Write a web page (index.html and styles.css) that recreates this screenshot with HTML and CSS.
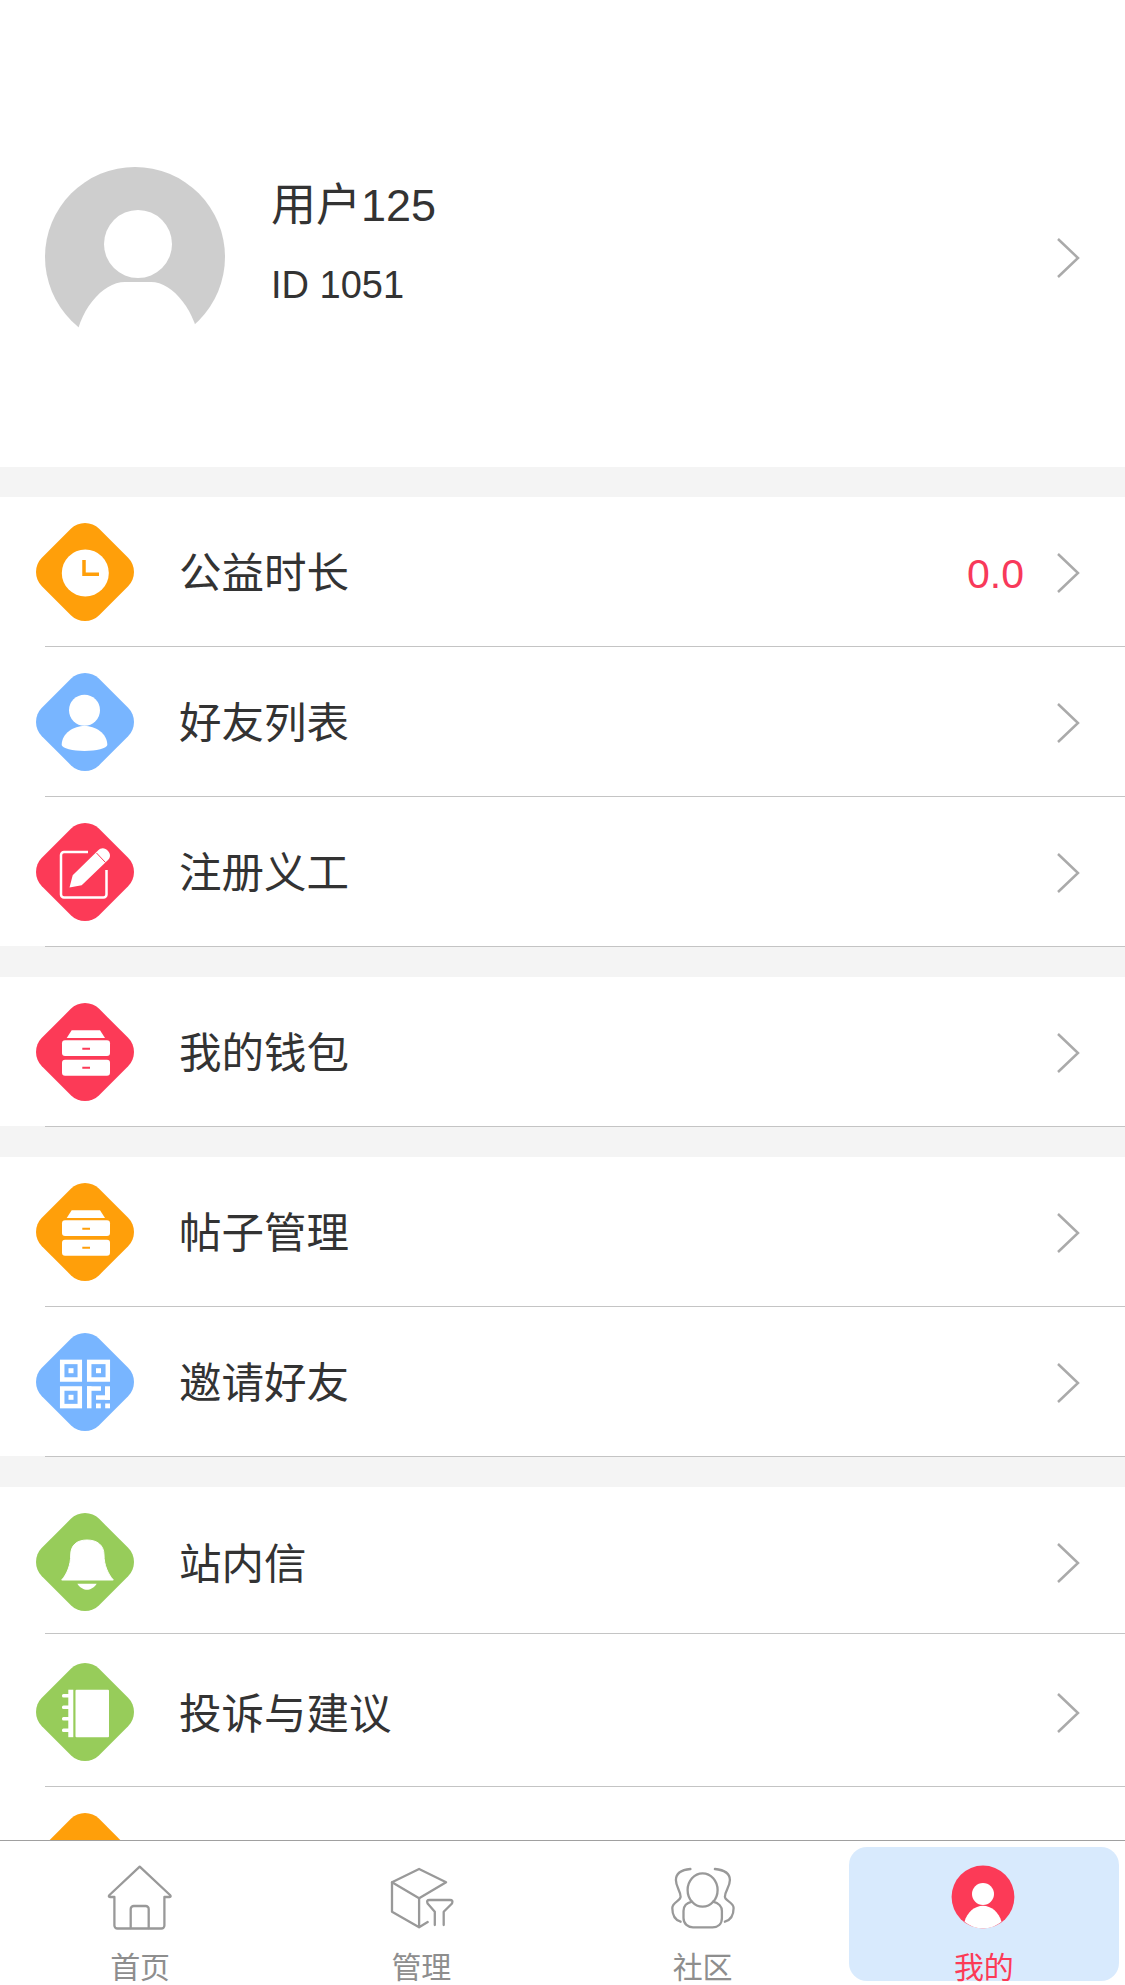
FILE: index.html
```html
<!DOCTYPE html>
<html lang="zh-CN">

<head>
  <meta charset="UTF-8" />
  <meta name="viewport" content="width=device-width, initial-scale=1.0" />
  <title>我的</title>
  <link rel="stylesheet" href="styles.css">
</head>

<body>
  <main class="content">
    <section class="profile">
      <svg class="avatar" width="190" height="180" viewBox="0 0 190 180">
        <circle cx="90" cy="90" r="90" fill="#cecece" />
        <circle cx="93" cy="77" r="34" fill="#fff" />
        <path d="M30 180 C32 145 57 115 80 115 H106 C128 115 152 145 155 180Z" fill="#fff" />
      </svg>
      <div class="profile-text">
        <div class="profile-name">用户125</div>
        <div class="profile-id">ID 1051</div>
      </div>
      <svg class="chevron" width="24" height="42" viewBox="0 0 24 42"><path d="M2 2 L22 21 L2 40" /></svg>
    </section>

    <section class="group">
      <div class="row">
        <svg class="icon orange" width="98" height="98" viewBox="0 0 98 98">
          <rect x="8.5" y="8.5" width="81" height="81" rx="20" transform="rotate(45 49 49)" fill="currentColor" />
          <circle cx="49.3" cy="50" r="23.5" fill="#fff" />
          <path d="M48 37 V51.3 H63" fill="none" stroke="currentColor" stroke-width="3.5" />
        </svg>
        <span class="label">公益时长</span>
        <span class="value">0.0</span>
        <svg class="chevron" width="24" height="42" viewBox="0 0 24 42"><path d="M2 2 L22 21 L2 40" /></svg>
      </div>
      <div class="sep"></div>
      <div class="row">
        <svg class="icon blue" width="98" height="98" viewBox="0 0 98 98">
          <rect x="8.5" y="8.5" width="81" height="81" rx="20" transform="rotate(45 49 49)" fill="currentColor" />
          <circle cx="48.5" cy="37.3" r="15.5" fill="#fff" />
          <path d="M25.7 72 C25.7 60 38 53 48.5 53 C59 53 71.3 60 71.3 72 C71.3 75 60 78 48.5 78 C37 78 25.7 75 25.7 72Z" fill="#fff" />
        </svg>
        <span class="label">好友列表</span>
        <svg class="chevron" width="24" height="42" viewBox="0 0 24 42"><path d="M2 2 L22 21 L2 40" /></svg>
      </div>
      <div class="sep"></div>
      <div class="row">
        <svg class="icon red" width="98" height="98" viewBox="0 0 98 98">
          <rect x="8.5" y="8.5" width="81" height="81" rx="20" transform="rotate(45 49 49)" fill="currentColor" />
          <path d="M52 29 H28 a3 3 0 0 0 -3 3 V71.5 a3 3 0 0 0 3 3 H67.5 a3 3 0 0 0 3 -3 V47" fill="none" stroke="#fff" stroke-width="2.5" />
          <path d="M33.5 64.5 L36.7 52.3 L62 27.5 C65 24.5 69 24.5 72 28 C75 31 74.5 35 71.5 37.5 L45.7 62.3Z" fill="#fff" />
          <path d="M60.5 30 L69.5 39.5" stroke="currentColor" stroke-width="1" />
        </svg>
        <span class="label">注册义工</span>
        <svg class="chevron" width="24" height="42" viewBox="0 0 24 42"><path d="M2 2 L22 21 L2 40" /></svg>
      </div>
      <div class="sep"></div>
    </section>

    <section class="group">
      <div class="row">
        <svg class="icon red" width="98" height="98" viewBox="0 0 98 98">
          <rect x="8.5" y="8.5" width="81" height="81" rx="20" transform="rotate(45 49 49)" fill="currentColor" />
          <path d="M35.7 27.3 H64 L69 35 H30.7Z" fill="#fff" />
          <rect x="26" y="37.3" width="48" height="15.7" rx="3" fill="#fff" />
          <rect x="26" y="56.7" width="48" height="16" rx="3" fill="#fff" />
          <path d="M46.3 45.7 H54 M46.3 64.7 H54" stroke="currentColor" stroke-width="2" />
        </svg>
        <span class="label">我的钱包</span>
        <svg class="chevron" width="24" height="42" viewBox="0 0 24 42"><path d="M2 2 L22 21 L2 40" /></svg>
      </div>
      <div class="sep"></div>
    </section>

    <section class="group">
      <div class="row">
        <svg class="icon orange" width="98" height="98" viewBox="0 0 98 98">
          <rect x="8.5" y="8.5" width="81" height="81" rx="20" transform="rotate(45 49 49)" fill="currentColor" />
          <path d="M35.7 27.3 H64 L69 35 H30.7Z" fill="#fff" />
          <rect x="26" y="37.3" width="48" height="15.7" rx="3" fill="#fff" />
          <rect x="26" y="56.7" width="48" height="16" rx="3" fill="#fff" />
          <path d="M46.3 45.7 H54 M46.3 64.7 H54" stroke="currentColor" stroke-width="2" />
        </svg>
        <span class="label">帖子管理</span>
        <svg class="chevron" width="24" height="42" viewBox="0 0 24 42"><path d="M2 2 L22 21 L2 40" /></svg>
      </div>
      <div class="sep"></div>
      <div class="row">
        <svg class="icon blue" width="98" height="98" viewBox="0 0 98 98">
          <rect x="8.5" y="8.5" width="81" height="81" rx="20" transform="rotate(45 49 49)" fill="currentColor" />
          <g fill="none" stroke="#fff" stroke-width="4.5">
            <rect x="26.2" y="28.9" width="17.6" height="17.6" />
            <rect x="53.2" y="28.9" width="18.6" height="17.6" />
            <rect x="26.2" y="55.5" width="17.6" height="17.6" />
          </g>
          <g fill="#fff">
            <rect x="32.5" y="35.2" width="5" height="5" />
            <rect x="60" y="35.2" width="5" height="5" />
            <rect x="32.5" y="61.8" width="5" height="5" />
            <rect x="51" y="53.3" width="4.5" height="22" />
            <rect x="51" y="53.3" width="14" height="4.5" />
            <rect x="69" y="53.3" width="5" height="13.5" />
            <rect x="60" y="62.3" width="14" height="4.5" />
            <rect x="60" y="70.5" width="4.8" height="4.8" />
            <rect x="69.2" y="70.5" width="4.8" height="4.8" />
          </g>
        </svg>
        <span class="label">邀请好友</span>
        <svg class="chevron" width="24" height="42" viewBox="0 0 24 42"><path d="M2 2 L22 21 L2 40" /></svg>
      </div>
      <div class="sep"></div>
    </section>

    <section class="group">
      <div class="row row-short">
        <svg class="icon green" width="98" height="98" viewBox="0 0 98 98">
          <rect x="8.5" y="8.5" width="81" height="81" rx="20" transform="rotate(45 49 49)" fill="currentColor" />
          <path d="M25.7 67 C31 61 34.7 52 34.7 42 C34.7 32 41 27 51 27 C61 27 68 32 68 42 C68 52 72 61 77.3 67Z" fill="#fff" stroke="#fff" stroke-width="1" stroke-linejoin="round" />
          <path d="M41.3 70.7 H60.7 C58 75 54 76.7 51 76.7 C48 76.7 44 75 41.3 70.7Z" fill="#fff" />
        </svg>
        <span class="label">站内信</span>
        <svg class="chevron" width="24" height="42" viewBox="0 0 24 42"><path d="M2 2 L22 21 L2 40" /></svg>
      </div>
      <div class="sep"></div>
      <div class="row row-tall">
        <svg class="icon green" width="98" height="98" viewBox="0 0 98 98">
          <rect x="8.5" y="8.5" width="81" height="81" rx="20" transform="rotate(45 49 49)" fill="currentColor" />
          <g fill="#fff">
            <rect x="39.5" y="26.7" width="33.5" height="47.5" rx="1" />
            <rect x="32.3" y="26.7" width="5" height="47.5" />
            <rect x="26" y="31" width="11" height="3.6" rx="1.5" />
            <rect x="26" y="42.5" width="11" height="3.6" rx="1.5" />
            <rect x="26" y="54" width="11" height="3.6" rx="1.5" />
            <rect x="26" y="65.5" width="11" height="3.6" rx="1.5" />
          </g>
        </svg>
        <span class="label">投诉与建议</span>
        <svg class="chevron" width="24" height="42" viewBox="0 0 24 42"><path d="M2 2 L22 21 L2 40" /></svg>
      </div>
      <div class="sep"></div>
      <div class="row">
        <svg class="icon orange" width="98" height="98" viewBox="0 0 98 98">
          <rect x="8.5" y="8.5" width="81" height="81" rx="20" transform="rotate(45 49 49)" fill="currentColor" />
          <rect x="44" y="27" width="11" height="20" fill="#fff" />
        </svg>
      </div>
    </section>
  </main>

  <nav class="tabbar">
    <a class="tab">
      <svg width="70" height="70" viewBox="0 0 70 70" class="tab-icon">
        <path d="M9.4 33 H5 Q3 33 4.5 31 L34.7 2.7 L65 31 Q66.5 33 64.5 33 H59.4 V61.5 a3 3 0 0 1 -3 3 H12.4 a3 3 0 0 1 -3 -3Z" />
        <path d="M25.7 64 V45 a3 3 0 0 1 3 -3 H40.7 a3 3 0 0 1 3 3 V64" />
      </svg>
      <span class="tab-label">首页</span>
    </a>
    <a class="tab">
      <svg width="70" height="70" viewBox="0 0 70 70" class="tab-icon">
        <path d="M33.1 5 L60.1 18.3 L33.1 34.3 L6 18.3Z" />
        <path d="M6 18.3 V47.7 L33.1 63.3 L41.7 58 M33.1 34.3 V63.3" />
        <path d="M48.8 61 V47.7 L41.6 39.5 Q40 36 43.5 36 H64 Q67.5 36 66 39.5 L57.7 47.7 V61" />
      </svg>
      <span class="tab-label">管理</span>
    </a>
    <a class="tab">
      <svg width="70" height="70" viewBox="0 0 70 70" class="tab-icon">
        <ellipse cx="34.6" cy="26" rx="15" ry="16.7" />
        <path d="M24 37.7 C18 39 15.5 43 15.5 47 V54 C15.5 60 20 63.3 25 63.3 H44.5 C50 63.3 53.9 60 53.9 54 V47 C53.9 43 51 39 45 37.7" />
        <path d="M22.4 5 C12 6 7.9 10 7.9 16 C7.9 23 12.6 27 12.6 32.7 C12.6 37 4.3 38 4.3 44 C4.3 52 7 56 12.6 57.7" />
        <path d="M46.9 5 C57 6 61.9 10 61.9 16 C61.9 23 56.9 27 56.9 32.7 C56.9 37 65.6 38 65.6 44 C65.6 52 63 56 56.9 57.7" />
      </svg>
      <span class="tab-label">社区</span>
    </a>
    <a class="tab tab-active">
      <svg width="70" height="70" viewBox="0 0 70 70">
        <circle cx="34" cy="33" r="31.4" fill="#fc3a57" />
        <circle cx="34" cy="30" r="11" fill="#fff" />
        <path d="M15.5 57.7 C18 48 26 41.7 34 41.7 C42 41.7 50 48 52.5 57.7 C47 62 41 64.4 34 64.4 C27 64.4 21 62 15.5 57.7Z" fill="#fff" />
      </svg>
      <span class="tab-label">我的</span>
    </a>
  </nav>
</body>

</html>
```

FILE: styles.css
```css
* {
  box-sizing: border-box;
}

html,
body {
  height: 100%;
}

body {
  margin: 0;
  display: flex;
  flex-direction: column;
  overflow: hidden;
  background: #fff;
  color: #333;
  font-family: "Liberation Sans", "Noto Sans CJK SC", sans-serif;
}

.content {
  flex: 1;
  min-height: 0;
  overflow: hidden;
  background: #f4f4f4;
}

/* Header with avatar */
.profile {
  display: flex;
  align-items: center;
  height: 467px;
  padding: 47px 45px 0 45px;
  background: #fff;
}

.avatar {
  flex: none;
  margin-right: 36px;
}

.profile-text {
  flex: 1;
  margin-bottom: 34px;
}

.profile-name {
  font-size: 45px;
  line-height: 60px;
}

.profile-id {
  margin-top: 29px;
  font-size: 38px;
  line-height: 40px;
}

.chevron {
  flex: none;
  margin-top: 2px;
}

.chevron path {
  fill: none;
  stroke: #aaa;
  stroke-width: 2.5;
}

/* List groups */
.group {
  margin-top: 30px;
  background: #fff;
}

.row {
  display: flex;
  align-items: center;
  height: 149px;
  padding: 0 45px 0 36px;
}

.row-short {
  height: 146px;
  padding-top: 4px;
}

.row-tall {
  height: 152px;
  padding-top: 4px;
}

.sep {
  height: 1px;
  border-left: 45px solid #fff;
  background: #c4c4c4;
}

.sep:last-child {
  border-left-color: #f4f4f4;
}

.icon {
  flex: none;
  margin-right: 45px;
}

.orange {
  color: #ff9f0a;
}

.blue {
  color: #78b5ff;
}

.red {
  color: #fc3a57;
}

.green {
  color: #97cc5a;
}

.label {
  flex: 1;
  padding-top: 5px;
  font-size: 42.5px;
  line-height: 60px;
}

.value {
  margin-right: 32px;
  padding-top: 5px;
  font-size: 41px;
  color: #f8395a;
}

/* Bottom tabs */
.tabbar {
  flex: none;
  display: grid;
  grid-template-columns: repeat(4, 1fr);
  grid-template-rows: minmax(0, 1fr);
  height: 145px;
  border-top: 1px solid #a0a0a0;
  background: #fff;
}

.tab {
  display: flex;
  flex-direction: column;
  align-items: center;
  min-height: 0;
  margin: 6px 6px 4px 5px;
  padding-top: 17px;
  border-radius: 18px;
  font-size: 30px;
  line-height: 36px;
  color: #8e8e8e;
}

.tab svg {
  flex: none;
}

.tab-label {
  flex: none;
  margin-top: 16px;
}

.tab-active {
  background: #d8eafd;
  color: #fc3a57;
}

.tab-icon {
  fill: none;
  stroke: #999;
  stroke-width: 2.3;
  stroke-linejoin: round;
  stroke-linecap: round;
}
```
